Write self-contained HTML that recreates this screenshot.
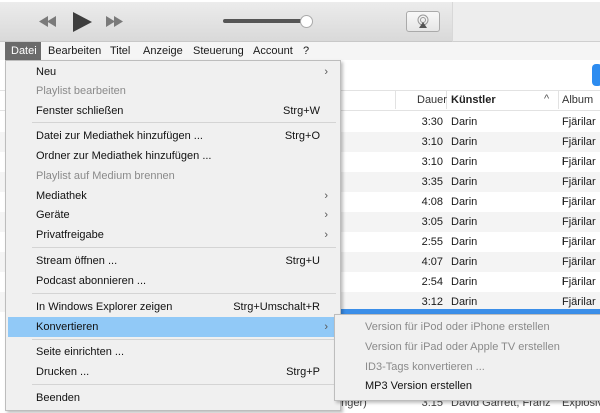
<!DOCTYPE html>
<html><head><meta charset="utf-8"><style>
*{margin:0;padding:0;box-sizing:border-box}
body{width:600px;height:412px;overflow:hidden;background:#fff;font-family:"Liberation Sans",sans-serif;font-size:11px;color:#1a1a1a;position:relative}
.a{position:absolute;white-space:nowrap}
.mi{position:absolute;left:31px;height:14px;line-height:14px;white-space:nowrap;color:#111}
.g{color:#8a8a8a!important}
.sc{position:absolute;right:21px;height:14px;line-height:14px;color:#111}
.ar{position:absolute;right:13px;height:14px;line-height:14px;color:#555;font-size:11px}
.sep{position:absolute;left:27px;right:5px;height:1px;background:#d4d4d4}
.row{position:absolute;left:0;width:600px;height:20px;line-height:20px}
.row span{position:absolute}
</style></head><body>
<div class="a" style="left:0;top:2px;width:452px;height:40px;background:linear-gradient(#ececec,#d9d9d9);border-bottom:1px solid #c8c8c8"></div>
<div class="a" style="left:452px;top:2px;width:148px;height:40px;background:#ededed;border-bottom:1px solid #cfcfcf;border-left:1px solid #d8d8d8"></div>
<svg class="a" style="left:30px;top:10px" width="100" height="24" viewBox="0 0 100 24">
<path d="M18 6 L18 17 L9 11.5Z M26 6 L26 17 L17 11.5Z" fill="#7a7a7a"/>
<path d="M43 2 L43 22 L62 12Z" fill="#3e3e3e"/>
<path d="M76 6 L76 17 L85 11.5Z M84 6 L84 17 L93 11.5Z" fill="#7a7a7a"/>
</svg>
<div class="a" style="left:223px;top:19px;width:82px;height:4px;background:#555;border-radius:2px"></div>
<div class="a" style="left:300px;top:15px;width:13px;height:13px;background:#fff;border:1px solid #aaa;border-radius:50%"></div>
<div class="a" style="left:406px;top:11px;width:34px;height:21px;border:1px solid #aaa;border-radius:3px;background:linear-gradient(#f8f8f8,#e6e6e6)"></div>
<svg class="a" style="left:416px;top:14px" width="14" height="15" viewBox="0 0 14 15"><circle cx="7" cy="6" r="5" fill="none" stroke="#999" stroke-width="1"/><circle cx="7" cy="6" r="2.5" fill="none" stroke="#999"/><path d="M3 14 L7 8 L11 14Z" fill="#555"/></svg>
<div class="a" style="left:0;top:42px;width:600px;height:18px;background:#f5f5f5"></div>
<div class="a" style="left:5px;top:42px;width:36px;height:18px;background:#6b6b6b"></div>
<div class="a" style="left:11px;top:44px;color:#fff;line-height:14px">Datei</div>
<div class="a" style="left:48px;top:44px;line-height:14px">Bearbeiten</div>
<div class="a" style="left:110px;top:44px;line-height:14px">Titel</div>
<div class="a" style="left:143px;top:44px;line-height:14px">Anzeige</div>
<div class="a" style="left:193px;top:44px;line-height:14px">Steuerung</div>
<div class="a" style="left:253px;top:44px;line-height:14px">Account</div>
<div class="a" style="left:303px;top:44px;line-height:14px">?</div>
<div class="a" style="left:592px;top:64px;width:10px;height:22px;background:#2d8cf0;border-radius:4px"></div>
<div class="a" style="left:0;top:90px;width:600px;height:1px;background:#e2e2e2"></div>
<div class="a" style="left:395px;top:91px;width:1px;height:18px;background:#e2e2e2"></div>
<div class="a" style="left:446px;top:91px;width:1px;height:18px;background:#e2e2e2"></div>
<div class="a" style="left:558px;top:91px;width:1px;height:18px;background:#e2e2e2"></div>
<div class="a" style="left:417px;top:94px;color:#333">Dauer</div>
<div class="a" style="left:451px;top:94px;font-weight:bold;color:#222">Künstler</div>
<div class="a" style="left:544px;top:93px;color:#555">^</div>
<div class="a" style="left:562px;top:94px;color:#333">Album</div>
<div class="a" style="left:0;top:110px;width:600px;height:1px;background:#e2e2e2"></div>
<div class="row" style="top:112px"><span style="right:157px">3:30</span><span style="left:451px">Darin</span><span style="left:562px">Fjärilar i</span></div>
<div class="row" style="top:132px;background:#f4f4f4"><span style="right:157px">3:10</span><span style="left:451px">Darin</span><span style="left:562px">Fjärilar i</span></div>
<div class="row" style="top:152px"><span style="right:157px">3:10</span><span style="left:451px">Darin</span><span style="left:562px">Fjärilar i</span></div>
<div class="row" style="top:172px;background:#f4f4f4"><span style="right:157px">3:35</span><span style="left:451px">Darin</span><span style="left:562px">Fjärilar i</span></div>
<div class="row" style="top:192px"><span style="right:157px">4:08</span><span style="left:451px">Darin</span><span style="left:562px">Fjärilar i</span></div>
<div class="row" style="top:212px;background:#f4f4f4"><span style="right:157px">3:05</span><span style="left:451px">Darin</span><span style="left:562px">Fjärilar i</span></div>
<div class="row" style="top:232px"><span style="right:157px">2:55</span><span style="left:451px">Darin</span><span style="left:562px">Fjärilar i</span></div>
<div class="row" style="top:252px;background:#f4f4f4"><span style="right:157px">4:07</span><span style="left:451px">Darin</span><span style="left:562px">Fjärilar i</span></div>
<div class="row" style="top:272px"><span style="right:157px">2:54</span><span style="left:451px">Darin</span><span style="left:562px">Fjärilar i</span></div>
<div class="row" style="top:292px;background:#f4f4f4"><span style="right:157px">3:12</span><span style="left:451px">Darin</span><span style="left:562px">Fjärilar i</span></div>
<div class="a" style="left:340px;top:309px;width:260px;height:20px;background:#3b8ee8"></div>
<div class="row" style="top:393px;color:#444"><span style="left:335px">ringer)</span><span style="right:157px">3:15</span><span style="left:451px">David Garrett, Franz</span><span style="left:562px">Explosiv</span></div>
<div class="a" style="left:5px;top:60px;width:336px;height:351px;background:#f0f0f0;border:1px solid #bdbdbd;box-shadow:2px 2px 3px rgba(0,0,0,.25)">
<div class="a" style="left:2px;top:256px;width:326px;height:20px;background:#91c9f7"></div>
</div>
<div class="a" style="left:5px;top:60px;width:336px;height:351px">
<div class="mi" style="top:5px">Neu</div><div class="ar" style="top:5px">›</div>
<div class="mi g" style="top:24px">Playlist bearbeiten</div>
<div class="mi" style="top:44px">Fenster schließen</div><div class="sc" style="top:44px">Strg+W</div>
<div class="sep" style="top:62px"></div>
<div class="mi" style="top:69px">Datei zur Mediathek hinzufügen ...</div><div class="sc" style="top:69px">Strg+O</div>
<div class="mi" style="top:89px">Ordner zur Mediathek hinzufügen ...</div>
<div class="mi g" style="top:109px">Playlist auf Medium brennen</div>
<div class="mi" style="top:129px">Mediathek</div><div class="ar" style="top:129px">›</div>
<div class="mi" style="top:148px">Geräte</div><div class="ar" style="top:148px">›</div>
<div class="mi" style="top:168px">Privatfreigabe</div><div class="ar" style="top:168px">›</div>
<div class="sep" style="top:187px"></div>
<div class="mi" style="top:194px">Stream öffnen ...</div><div class="sc" style="top:194px">Strg+U</div>
<div class="mi" style="top:214px">Podcast abonnieren ...</div>
<div class="sep" style="top:233px"></div>
<div class="mi" style="top:240px">In Windows Explorer zeigen</div><div class="sc" style="top:240px">Strg+Umschalt+R</div>
<div class="mi" style="top:260px">Konvertieren</div><div class="ar" style="top:260px">›</div>
<div class="sep" style="top:279px"></div>
<div class="mi" style="top:285px">Seite einrichten ...</div>
<div class="mi" style="top:305px">Drucken ...</div><div class="sc" style="top:305px">Strg+P</div>
<div class="sep" style="top:324px"></div>
<div class="mi" style="top:331px">Beenden</div>
</div>
<div class="a" style="left:334px;top:314px;width:270px;height:87px;background:#f0f0f0;border:1px solid #bdbdbd;box-shadow:2px 2px 3px rgba(0,0,0,.25)">
<div class="mi g" style="left:30px;top:5px">Version für iPod oder iPhone erstellen</div>
<div class="mi g" style="left:30px;top:25px">Version für iPad oder Apple TV erstellen</div>
<div class="mi g" style="left:30px;top:45px">ID3-Tags konvertieren ...</div>
<div class="mi" style="left:30px;top:64px">MP3 Version erstellen</div>
</div>
</body></html>
